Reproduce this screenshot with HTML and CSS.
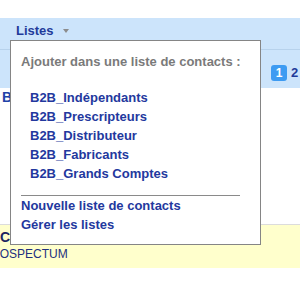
FILE: index.html
```html
<!DOCTYPE html>
<html lang="fr">
<head>
    <meta charset="UTF-8">
    <meta name="viewport" content="width=device-width, initial-scale=1.0">
    <title>Listes de contacts</title>
    <link rel="stylesheet" href="styles.css">
</head>
<body>

<div class="top-space"></div>

<div class="menu-bar">
    <div class="menu-item">Listes <span class="caret"></span></div>

    <!-- menu ouvert -->
    <div class="dropdown">
        <div class="dropdown-title">Ajouter dans une liste de contacts :</div>
        <ul class="dropdown-lists">
            <li><a href="#">B2B_Indépendants</a></li>
            <li><a href="#">B2B_Prescripteurs</a></li>
            <li><a href="#">B2B_Distributeur</a></li>
            <li><a href="#">B2B_Fabricants</a></li>
            <li><a href="#">B2B_Grands Comptes</a></li>
        </ul>
        <div class="dropdown-sep"></div>
        <a class="dropdown-action" href="#">Nouvelle liste de contacts</a>
        <a class="dropdown-action" href="#">Gérer les listes</a>
    </div>
</div>

<div class="sub-bar">
    <div class="pager">
        <span class="page current">1</span>
        <span class="page">2</span>
    </div>
</div>

<div class="content">
    <div class="section-title">B2B</div>
</div>

<div class="record">
    <div class="record-name">CA</div>
    <div class="record-type">PROSPECTUM</div>
</div>

</body>
</html>
```

FILE: styles.css
```css
body {
    margin: 0;
    padding: 0;
    font-family: "Liberation Sans", Arial, sans-serif;
    font-size: 13px;
    line-height: 19px;
    background-color: #fff;
    overflow: hidden;
}

a {
    text-decoration: none;
}

.top-space {
    height: 18px;
}

.menu-bar {
    position: relative;
    height: 28px;
    padding: 3px 16px 0 16px;
    background-color: #cce4fb;
    border-bottom: 1px solid #b7d2ec;
}

.menu-item {
    font-weight: bold;
    color: #1f3b9a;
}

.caret {
    display: inline-block;
    width: 0;
    height: 0;
    margin-left: 6px;
    vertical-align: 2px;
    border-left: 3.5px solid transparent;
    border-right: 3.5px solid transparent;
    border-top: 4px solid #8c8c8c;
}

.dropdown {
    position: absolute;
    top: 22px;
    left: 10px;
    z-index: 10;
    width: 229px;
    padding: 11px 10px 10px 10px;
    background-color: #fff;
    border: 1px solid #858585;
}

.dropdown-title {
    font-weight: bold;
    color: #7a7a7a;
    white-space: nowrap;
}

.dropdown-lists {
    list-style: none;
    margin: 17px 0 0 0;
    padding: 0 0 0 9px;
}

.dropdown-lists a,
.dropdown-action {
    font-weight: bold;
    color: #23389e;
}

.dropdown-sep {
    width: 219px;
    height: 1px;
    margin-top: 12px;
    background-color: #8a8a8a;
}

.dropdown-action {
    display: block;
}

.sub-bar {
    height: 38px;
    padding-left: 271px;
    background-color: #cce4fb;
    white-space: nowrap;
}

.pager {
    display: flex;
    align-items: center;
    gap: 4px;
    padding-top: 13px;
}

.page {
    font-weight: bold;
    color: #1f3b9a;
}

.page.current {
    flex: 0 0 16px;
    height: 16px;
    line-height: 17px;
    text-align: center;
    font-size: 12px;
    color: #fff;
    background-color: #3d9bf2;
    border-radius: 3px;
}

.content {
    height: 136px;
}

.section-title {
    padding-left: 2px;
    font-size: 14px;
    font-weight: bold;
    color: #2143a8;
}

.record {
    height: 39px;
    padding-top: 4px;
    background-color: #ffffcc;
    border-top: 1px solid #dcdcdc;
}

.record-name {
    font-size: 14px;
    font-weight: bold;
    line-height: 17px;
    color: #1d2460;
}

.record-type {
    margin-left: -17px;
    font-size: 12px;
    line-height: 16px;
    color: #22307f;
}
```
